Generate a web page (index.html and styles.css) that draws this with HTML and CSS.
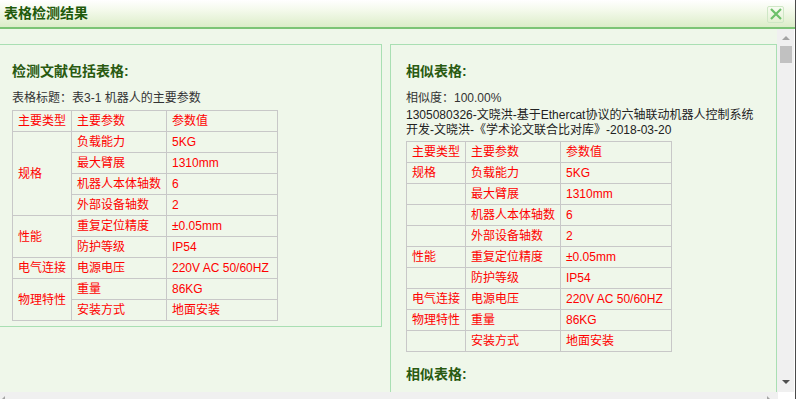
FILE: index.html
```html
<!DOCTYPE html>
<html lang="zh-CN">

<head>
    <meta charset="UTF-8">
    <title>表格检测结果</title>
    <link rel="stylesheet" href="styles.css">
</head>

<body>

    <div class="dialog">
        <!-- Title bar -->
        <div class="dlg-head">
            <span class="dlg-title">表格检测结果</span>
            <span class="dlg-close">
                <svg width="14" height="14" viewBox="0 0 14 14">
                    <path d="M2 2 L12 12 M12 2 L2 12" stroke="#6cc06a" stroke-width="2.2" fill="none" />
                </svg>
            </span>
        </div>

        <div class="dlg-main">
            <div class="dlg-content">
                <!-- Left: table found in the document -->
                <div class="panel panel-src">
                    <h3 class="panel-title">检测文献包括表格:</h3>
                    <p class="caption">表格标题：表3-1 机器人的主要参数</p>
                    <table class="param-table">
                        <colgroup>
                            <col class="c-type">
                            <col class="c-name">
                            <col class="c-value">
                        </colgroup>
                        <tr><td>主要类型</td><td>主要参数</td><td>参数值</td></tr>
                        <tr><td rowspan="4">规格</td><td>负载能力</td><td>5KG</td></tr>
                        <tr><td>最大臂展</td><td>1310mm</td></tr>
                        <tr><td>机器人本体轴数</td><td>6</td></tr>
                        <tr><td>外部设备轴数</td><td>2</td></tr>
                        <tr><td rowspan="2">性能</td><td>重复定位精度</td><td>±0.05mm</td></tr>
                        <tr><td>防护等级</td><td>IP54</td></tr>
                        <tr><td>电气连接</td><td>电源电压</td><td>220V AC 50/60HZ</td></tr>
                        <tr><td rowspan="2">物理特性</td><td>重量</td><td>86KG</td></tr>
                        <tr><td>安装方式</td><td>地面安装</td></tr>
                    </table>
                </div>

                <!-- Right: similar tables -->
                <div class="panel panel-sim">
                    <h3 class="panel-title">相似表格:</h3>
                    <p class="caption">相似度：100.00%</p>
                    <p class="source">1305080326-文晓洪-基于Ethercat协议的六轴联动机器人控制系统开发-文晓洪-《学术论文联合比对库》-2018-03-20</p>
                    <table class="param-table">
                        <colgroup>
                            <col class="c-type">
                            <col class="c-name">
                            <col class="c-value">
                        </colgroup>
                        <tr><td>主要类型</td><td>主要参数</td><td>参数值</td></tr>
                        <tr><td>规格</td><td>负载能力</td><td>5KG</td></tr>
                        <tr><td></td><td>最大臂展</td><td>1310mm</td></tr>
                        <tr><td></td><td>机器人本体轴数</td><td>6</td></tr>
                        <tr><td></td><td>外部设备轴数</td><td>2</td></tr>
                        <tr><td>性能</td><td>重复定位精度</td><td>±0.05mm</td></tr>
                        <tr><td></td><td>防护等级</td><td>IP54</td></tr>
                        <tr><td>电气连接</td><td>电源电压</td><td>220V AC 50/60HZ</td></tr>
                        <tr><td>物理特性</td><td>重量</td><td>86KG</td></tr>
                        <tr><td></td><td>安装方式</td><td>地面安装</td></tr>
                    </table>
                    <h3 class="panel-title next-title">相似表格:</h3>
                </div>
            </div>

            <!-- Vertical scrollbar -->
            <div class="vscroll">
                <span class="arrow-up"></span>
                <span class="thumb"></span>
                <span class="arrow-down"></span>
            </div>
        </div>

        <!-- Horizontal scrollbar (cut off) -->
        <div class="hscroll">
            <div class="hscroll-track">
                <span class="arrow-left"></span>
                <span class="arrow-right"></span>
            </div>
            <div class="hscroll-corner"></div>
        </div>
    </div>

</body>

</html>
```

FILE: styles.css
```css
/* Table check result dialog */
body {
    margin: 0;
    padding: 0;
    width: 796px;
    height: 399px;
    overflow: hidden;
    font-family: "Liberation Sans", Arial, "Noto Sans CJK SC", sans-serif;
    font-size: 12px;
    color: #333;
    background-color: #fff;
}

.dialog {
    width: 795px;
    height: 399px;
    border-right: 1px solid #4a4a4a;
    display: flex;
    flex-direction: column;
    overflow: hidden;
}

/* Title bar */
.dlg-head {
    height: 27px;
    flex: none;
    display: flex;
    align-items: center;
    justify-content: space-between;
    background: linear-gradient(to bottom, #ffffff 0%, #f3f9ea 40%, #dcedc9 100%);
    border-bottom: 2px solid #7cc476;
}

.dlg-title {
    padding-left: 4px;
    font-size: 14px;
    font-weight: bold;
    color: #1f5a0b;
    line-height: 27px;
}

.dlg-close {
    width: 15px;
    height: 15px;
    margin-right: 11px;
    margin-top: 1px;
    border: 1px solid #cfe7c6;
    border-radius: 2px;
    display: flex;
    align-items: center;
    justify-content: center;
}

/* Main area */
.dlg-main {
    height: 363px;
    flex: none;
    display: flex;
}

.dlg-content {
    width: 777px;
    flex: none;
    overflow: hidden;
    background-color: #eff7ea;
    display: flex;
    align-items: flex-start;
    gap: 8px;
    padding-top: 15px;
    box-sizing: border-box;
}

.panel {
    width: 385px;
    flex: none;
    border: 1px solid #a9dfb3;
    padding: 0 0 5px 0;
}

.panel-src {
    margin-left: -5px;
    padding-left: 16px;
    width: 369px;
}

.panel-sim {
    padding-left: 15px;
    width: 370px;
    padding-bottom: 60px;
}

.panel-title {
    margin: 16px 0 0 0;
    font-size: 14px;
    font-weight: bold;
    line-height: 20px;
    color: #295a10;
}

.next-title {
    margin-top: 12px;
}

.caption {
    margin: 7px 0 0 0;
    line-height: 20px;
    color: #333;
}

.source {
    width: 356px;
    margin: 0 0 3px 0;
    line-height: 15px;
    color: #222;
}

/* Parameter tables */
.param-table {
    border-collapse: collapse;
    table-layout: fixed;
    width: 265px;
    margin-top: 2px;
}

.panel-sim .param-table {
    margin-top: 0;
}

.c-type {
    width: 59px;
}

.c-name {
    width: 95px;
}

.c-value {
    width: 111px;
}

.param-table td {
    border: 1px solid #c8c8c8;
    height: 20px;
    padding: 0 5px;
    line-height: 20px;
    color: #ff0000;
    white-space: nowrap;
    overflow: hidden;
}

/* Fake scrollbars */
.vscroll {
    width: 17px;
    flex: none;
    background-color: #f0f0f0;
    display: flex;
    flex-direction: column;
    align-items: center;
    padding: 7px 0 8px 1px;
    box-sizing: border-box;
}

.arrow-up {
    width: 0;
    height: 0;
    border-left: 4px solid transparent;
    border-right: 4px solid transparent;
    border-bottom: 4px solid #a3a3a3;
}

.thumb {
    width: 12px;
    height: 17px;
    margin-top: 6px;
    background-color: #c1c1c1;
}

.arrow-down {
    width: 0;
    height: 0;
    margin-top: auto;
    border-left: 4px solid transparent;
    border-right: 4px solid transparent;
    border-top: 4px solid #505050;
}

.hscroll {
    flex: 1;
    display: flex;
}

.hscroll-track {
    width: 778px;
    background-color: #f0f0f0;
    display: flex;
    justify-content: space-between;
    align-items: flex-end;
    padding: 0 8px 0 2px;
    box-sizing: border-box;
}

.arrow-left {
    width: 0;
    height: 0;
    border-top: 3px solid transparent;
    border-right: 3px solid #a3a3a3;
}

.arrow-right {
    width: 0;
    height: 0;
    border-top: 3px solid transparent;
    border-left: 3px solid #a3a3a3;
}

.hscroll-corner {
    flex: 1;
    background-color: #fff;
}
```
